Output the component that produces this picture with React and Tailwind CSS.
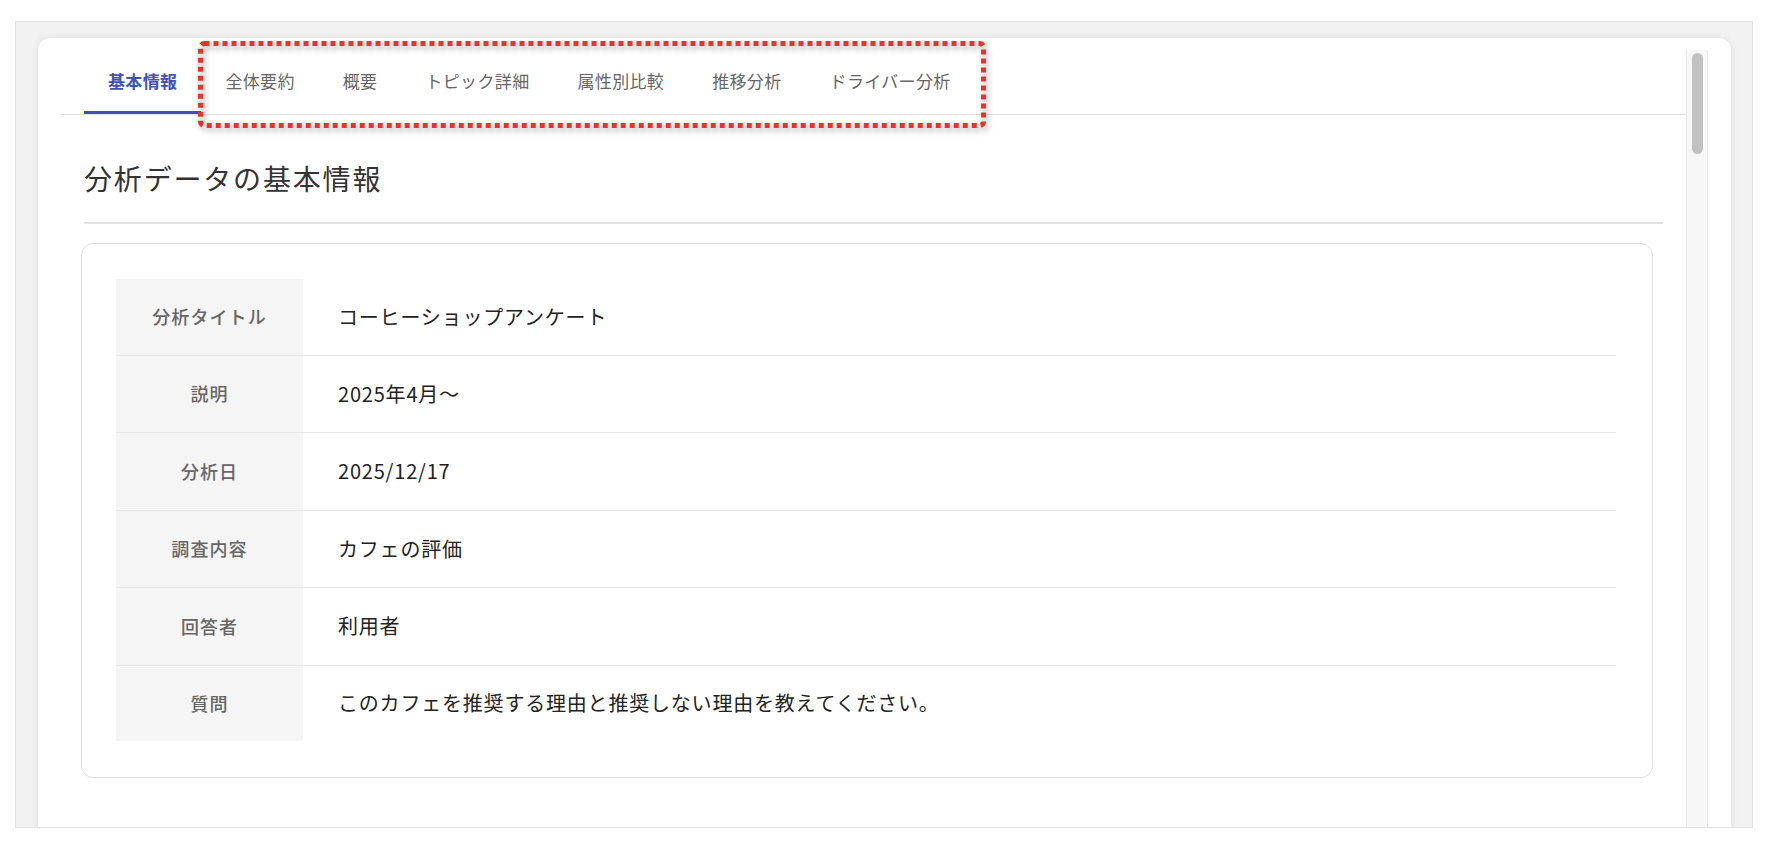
import React from 'react'

const TABS = ['基本情報', '全体要約', '概要', 'トピック詳細', '属性別比較', '推移分析', 'ドライバー分析']

const ROWS = [
    ['分析タイトル', 'コーヒーショップアンケート'],
    ['説明', '2025年4月〜'],
    ['分析日', '2025/12/17'],
    ['調査内容', 'カフェの評価'],
    ['回答者', '利用者'],
    ['質問', 'このカフェを推奨する理由と推奨しない理由を教えてください。'],
]

const App = () => {
    return (
        <div className="min-h-screen bg-white pl-[15px] pt-[21px] font-['Noto_Sans_CJK_JP','Noto_Sans',sans-serif]">
            {/* Outer frame */}
            <div className="w-[1738px] h-[807px] bg-[#f2f2f2] border border-[#e3e3e3] overflow-hidden pl-[22px] pt-[16px] pr-[21px]">
                <div className="relative h-[820px] bg-white rounded-t-[12px] shadow-[0_0_7px_rgba(0,0,0,0.10)] flex pl-[23px] pt-[12px] pr-[23px]">
                    {/* Scrollable content */}
                    <div className="flex-1 min-w-0">
                        {/* Tabs */}
                        <div className="flex pl-[23px] border-b border-[#e0e0e0]">
                            {TABS.map((t, i) => (
                                <button
                                    key={t}
                                    className={`h-[64px] px-[24px] flex items-center text-[17px] tracking-[0.02em] border-b-[3px] ${i === 0
                                            ? 'border-[#3f51b5] text-[#3f51b5] font-bold'
                                            : 'border-transparent text-[#666666]'
                                        }`}
                                >
                                    {t}
                                </button>
                            ))}
                        </div>

                        {/* Panel */}
                        <div className="px-[23px]">
                            <h2 className="pt-[43px] pb-[24px] text-[28px] leading-[40px] tracking-[0.065em] text-[#333333] font-normal border-b-2 border-[#e2e2e2]">
                                分析データの基本情報
                            </h2>

                            <div className="mt-[19px] ml-[-3px] mr-[10px] border border-[#dedede] rounded-[12px] pl-[34px] pr-[36px] pt-[35px] pb-[36px]">
                                <table className="w-full border-collapse">
                                    <tbody>
                                        {ROWS.map(([label, value], i) => (
                                            <tr
                                                key={label}
                                                className={`${i === 0 || i === ROWS.length - 1 ? 'h-[76px]' : 'h-[77.5px]'} ${i < ROWS.length - 1 ? 'border-b border-[#e6e6e6]' : ''}`}
                                            >
                                                <td className="w-[187px] bg-[#f5f5f5] text-center text-[18px] tracking-[0.06em] font-medium text-[#666666]">
                                                    {label}
                                                </td>
                                                <td className="pl-[35px] text-[20px] tracking-[0.04em] text-[#222222]">
                                                    {value}
                                                </td>
                                            </tr>
                                        ))}
                                    </tbody>
                                </table>
                            </div>
                        </div>
                    </div>

                    {/* Scrollbar */}
                    <div className="w-[22px] shrink-0 bg-[#f7f7f7] border-x border-[#e8e8e8] pt-[3px] pl-[5px]">
                        <div className="w-[11px] h-[101px] rounded-full bg-[#c1c1c1]" />
                    </div>

                    {/* Annotation overlay */}
                    <svg
                        className="absolute left-[160px] top-[3px] drop-shadow-[2px_3px_3px_rgba(0,0,0,0.35)]"
                        width="789"
                        height="88"
                        viewBox="0 0 789 88"
                    >
                        <rect
                            x="2.5"
                            y="2.5"
                            width="783"
                            height="82"
                            rx="4"
                            fill="none"
                            stroke="#ec3226"
                            strokeWidth="5"
                            strokeDasharray="5 4"
                        />
                    </svg>
                </div>
            </div>
        </div>
    )
}

export default App
